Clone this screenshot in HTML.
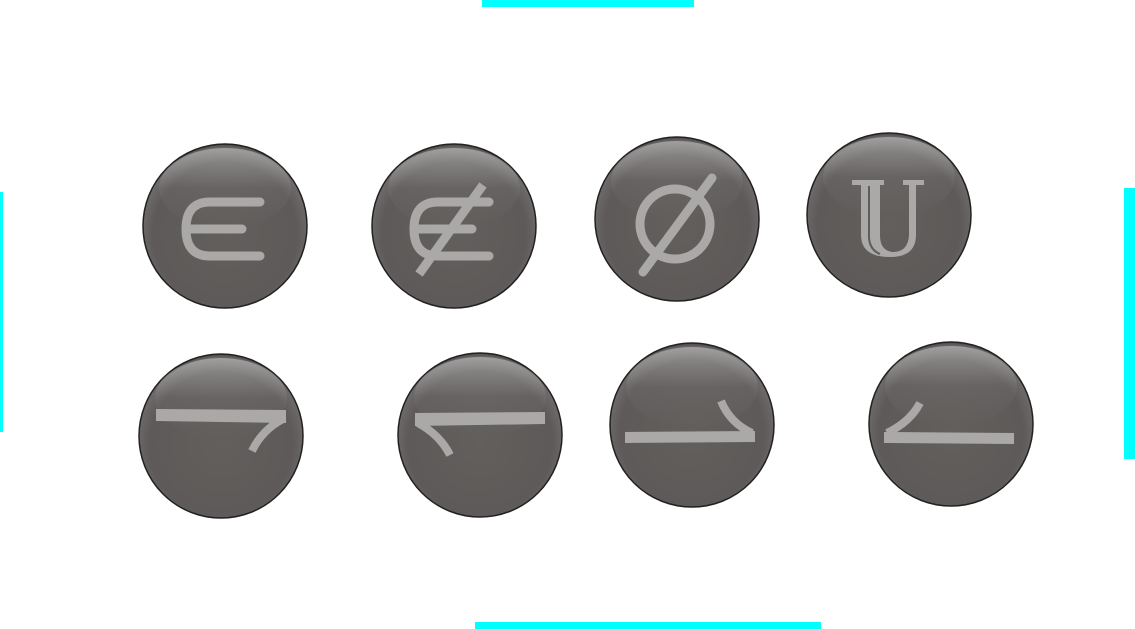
<!DOCTYPE html>
<html><head><meta charset="utf-8"><style>
html,body{margin:0;padding:0;background:#fff;width:1135px;height:629px;overflow:hidden}
</style></head><body>
<svg width="1135" height="629" viewBox="0 0 1135 629" xmlns="http://www.w3.org/2000/svg">
<defs>
<radialGradient id="g" cx="0.5" cy="0.55" r="0.55">
<stop offset="0" stop-color="#625f5d"/>
<stop offset="0.8" stop-color="#5d5a59"/>
<stop offset="0.95" stop-color="#6e6b6a"/>
<stop offset="1" stop-color="#4a4847"/>
</radialGradient>
<linearGradient id="h" x1="0" y1="0" x2="0" y2="1">
<stop offset="0" stop-color="#fff" stop-opacity="0.35"/>
<stop offset="0.5" stop-color="#fff" stop-opacity="0.05"/>
<stop offset="1" stop-color="#fff" stop-opacity="0"/>
</linearGradient>
<g id="b">
<circle r="82" fill="url(#g)" stroke="#222" stroke-width="1.5"/>
<ellipse cx="0" cy="-38" rx="66" ry="40" fill="url(#h)"/>
</g>
</defs>
<rect x="482" y="0" width="212" height="7" fill="#00ffff"/>
<rect x="475" y="622" width="346" height="7" fill="#00ffff"/>
<rect x="0" y="192" width="3" height="240" fill="#00ffff"/>
<rect x="1124" y="188" width="11" height="271" fill="#00ffff"/>

<use href="#b" x="225" y="226"/>
<use href="#b" x="454" y="226"/>
<use href="#b" x="677" y="219"/>
<use href="#b" x="889" y="215"/>
<use href="#b" x="221" y="436"/>
<use href="#b" x="480" y="435"/>
<use href="#b" x="692" y="425"/>
<use href="#b" x="951" y="424"/>

<g fill="none" stroke="#aaa9a8" stroke-width="9" stroke-linecap="round">
<path d="M260 202 H210 Q186 202 186 229 Q186 256 210 256 H260 M190 229 H242"/>
<path d="M489 202 H438 Q414 202 414 229 Q414 256 438 256 H489 M418 229 H472"/>
<circle cx="675" cy="224" r="35"/>
</g>
<g fill="none" stroke="#aaa9a8" stroke-width="8">
<path d="M483 185 L419 274" stroke-width="9"/>
<path d="M712 178 L643 272" stroke-width="9" stroke-linecap="round"/>
<path d="M283 419 Q262 430 252 451"/>
<path d="M418 423 Q440 435 450 455"/>
<path d="M752 433 Q730 423 721 401"/>
<path d="M887 433 Q910 422 920 403"/>
</g>
<g fill="#aaa9a8">
<path d="M156 409 L286 410 V423 L156 421 Z"/>
<path d="M415 413 L545 412 V424 L415 426 Z"/>
<path d="M625 432 L755 431 V442 L625 443 Z"/>
<path d="M884 432 L1014 433 V444 L884 443 Z"/>
</g>
<path fill="#aaa9a8" d="M852 180 H884 V185 H880 V235 Q880 251 893 252 Q908 252 909 235 V185 H903 V180 H924 V185 H916 V235 Q916 257 890 257 Q861 257 861 235 V185 H852 Z"/>
<path d="M869 186 V238 Q870 250 880 254" stroke="#5f5c5b" stroke-width="2" fill="none"/>
</svg>
</body></html>
